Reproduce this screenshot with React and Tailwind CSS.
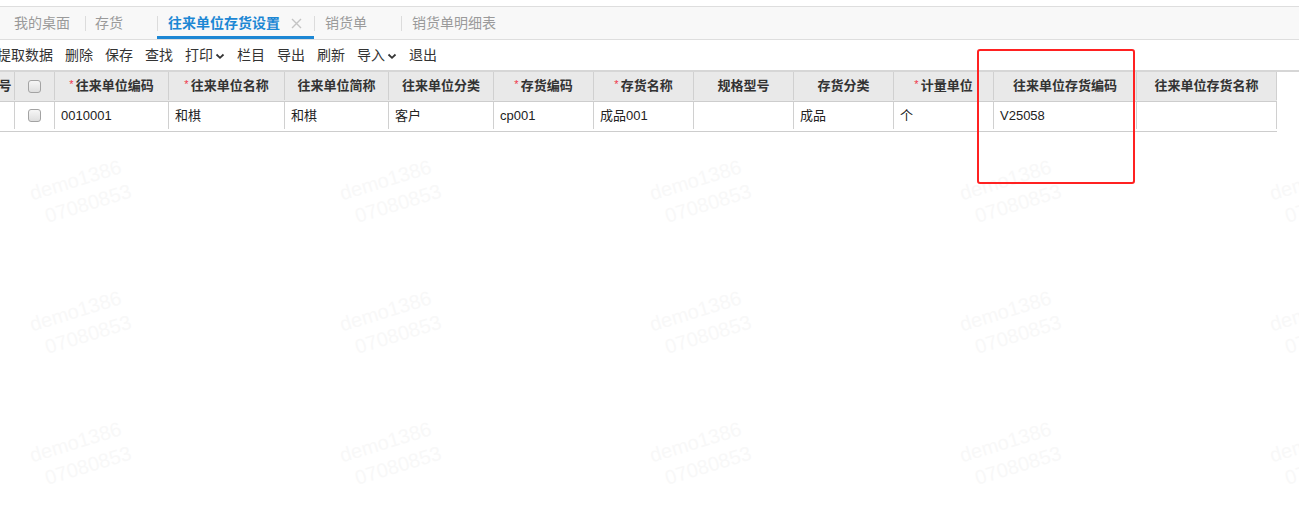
import React from "react";

// 列定义：宽度按边框到边框量取
const COLS = [
  { label: "序号", w: "w-[32px]" },
  { check: true, w: "w-[40px]" },
  { label: "往来单位编码", req: true, w: "w-[114px]", value: "0010001" },
  { label: "往来单位名称", req: true, w: "w-[116px]", value: "和棋" },
  { label: "往来单位简称", w: "w-[104px]", value: "和棋" },
  { label: "往来单位分类", w: "w-[105px]", value: "客户" },
  { label: "存货编码", req: true, w: "w-[100px]", value: "cp001" },
  { label: "存货名称", req: true, w: "w-[100px]", value: "成品001" },
  { label: "规格型号", w: "w-[100px]", value: "" },
  { label: "存货分类", w: "w-[100px]", value: "成品" },
  { label: "计量单位", req: true, w: "w-[100px]", value: "个" },
  { label: "往来单位存货编码", w: "w-[143px]", value: "V25058" },
  { label: "往来单位存货名称", w: "w-[140px]", value: "" },
];

const TOOLS = [
  { label: "提取数据" },
  { label: "删除" },
  { label: "保存" },
  { label: "查找" },
  { label: "打印", menu: true },
  { label: "栏目" },
  { label: "导出" },
  { label: "刷新" },
  { label: "导入", menu: true },
  { label: "退出" },
];

function Chevron() {
  return (
    <svg width="10" height="8" viewBox="0 0 10 8" className="ml-[2px] mt-[1px]">
      <polyline points="1.5,2.5 5,5.8 8.5,2.5" fill="none" stroke="#333" strokeWidth="1.8" />
    </svg>
  );
}

function Checkbox() {
  return (
    <span className="block w-[13px] h-[13px] rounded-[3px] border border-[#a3a3a3] bg-gradient-to-b from-[#f6f6f6] to-[#dedede]" />
  );
}

function Watermark() {
  return (
    <div className="w-max -rotate-[17deg] text-[20px] leading-[26px] text-[#f8f8f8] select-none">
      <div>demo1386</div>
      <div className="pl-[8px]">07080853</div>
    </div>
  );
}

export default function App() {
  return (
    <div className="relative w-[1299px] h-[505px] overflow-hidden bg-white font-['Liberation_Sans','Noto_Sans_CJK_SC',sans-serif]">
      {/* 水印 */}
      <div className="pointer-events-none absolute left-[32px] top-[166px] grid grid-cols-[repeat(5,310px)] auto-rows-[131px] items-start justify-items-start">
        {Array.from({ length: 15 }).map((_, i) => (
          <Watermark key={i} />
        ))}
      </div>

      <div className="relative">
        <div className="h-[6px]" />
        {/* 页签栏 */}
        <div className="flex h-[34px] items-stretch border-y border-[#dedede] bg-[#f8f8f8] text-[14px] text-[#9a9a9a]">
          <div className="flex w-[85px] items-center pl-[14px]">我的桌面</div>
          <div className="flex w-[72px] items-center pl-[10px] relative">
            <span className="absolute left-0 top-[9px] h-[15px] w-px bg-[#dcdcdc]" />
            存货
          </div>
          <div className="relative flex w-[157px] items-center pl-[11px] font-bold text-[#1c87d4]">
            <span className="absolute left-0 top-[9px] h-[15px] w-px bg-[#dcdcdc]" />
            往来单位存货设置
            <svg width="11" height="11" viewBox="0 0 11 11" className="ml-[11px]">
              <path d="M1 1 L10 10 M10 1 L1 10" stroke="#c4c4c4" strokeWidth="1.4" />
            </svg>
            <span className="absolute left-0 right-0 bottom-0 h-[3px] bg-[#1c87d4]" />
          </div>
          <div className="relative flex w-[87px] items-center pl-[11px]">
            <span className="absolute left-0 top-[9px] h-[15px] w-px bg-[#dcdcdc]" />
            销货单
          </div>
          <div className="relative flex items-center pl-[11px]">
            <span className="absolute left-0 top-[9px] h-[15px] w-px bg-[#dcdcdc]" />
            销货单明细表
          </div>
        </div>

        {/* 工具栏 */}
        <div className="flex h-[30px] items-center gap-[12px] ml-[-3px] text-[14px] text-[#333]">
          {TOOLS.map((t) => (
            <div key={t.label} className="flex items-center">
              {t.label}
              {t.menu && <Chevron />}
            </div>
          ))}
        </div>

        {/* 表格 */}
        <div className="border-t-2 border-[#d6d6d6]">
          <div className="ml-[-17px] w-max">
            <div className="flex h-[30px] border-b border-[#cdcdcd] bg-[#e9e9e9] pb-[1px] text-[13px] font-bold text-[#333]">
              {COLS.map((c, i) => (
                <div
                  key={i}
                  className={`${c.w} shrink-0 flex items-center justify-center border-r border-[#d0d0d0]`}
                >
                  {c.check ? (
                    <Checkbox />
                  ) : (
                    <span className="whitespace-nowrap">
                      {c.req && <span className="mr-[2px] text-[11px] font-normal text-[#f0364a] align-top">*</span>}
                      {c.label}
                    </span>
                  )}
                </div>
              ))}
            </div>
            <div className="flex h-[30px] border-b border-[#cdcdcd] bg-white pb-[2px] text-[13px] text-[#222]">
              {COLS.map((c, i) => (
                <div
                  key={i}
                  className={`${c.w} shrink-0 flex items-center border-r border-[#d0d0d0] ${
                    c.check ? "justify-center" : "pl-[6px]"
                  }`}
                >
                  {c.check ? <Checkbox /> : <span className="whitespace-nowrap">{c.value}</span>}
                </div>
              ))}
            </div>
          </div>
        </div>
      </div>

      {/* 红框标注 */}
      <div className="pointer-events-none absolute left-[977px] top-[49px] h-[135px] w-[158px] rounded-[3px] border-[2.5px] border-[#ff2121]" />
    </div>
  );
}
